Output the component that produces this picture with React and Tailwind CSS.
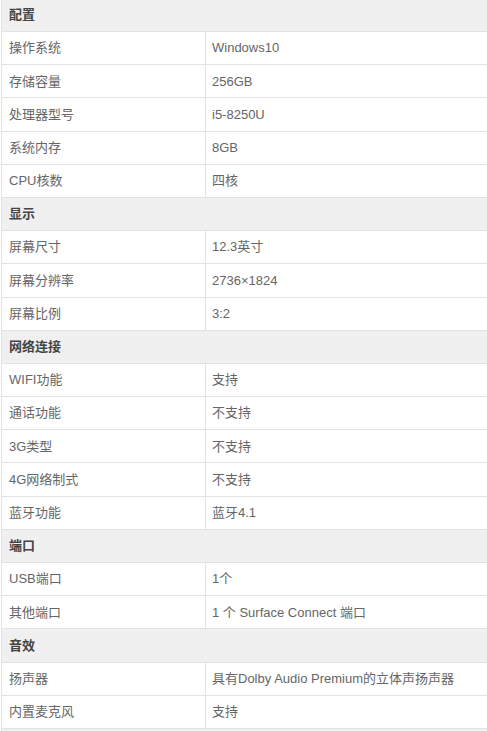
import React from "react";

const sections = [
  {
    title: "配置",
    rows: [
      ["操作系统", "Windows10"],
      ["存储容量", "256GB"],
      ["处理器型号", "i5-8250U"],
      ["系统内存", "8GB"],
      ["CPU核数", "四核"],
    ],
  },
  {
    title: "显示",
    rows: [
      ["屏幕尺寸", "12.3英寸"],
      ["屏幕分辨率", "2736×1824"],
      ["屏幕比例", "3:2"],
    ],
  },
  {
    title: "网络连接",
    rows: [
      ["WIFI功能", "支持"],
      ["通话功能", "不支持"],
      ["3G类型", "不支持"],
      ["4G网络制式", "不支持"],
      ["蓝牙功能", "蓝牙4.1"],
    ],
  },
  {
    title: "端口",
    rows: [
      ["USB端口", "1个"],
      ["其他端口", "1 个 Surface Connect 端口"],
    ],
  },
  {
    title: "音效",
    rows: [
      ["扬声器", "具有Dolby Audio Premium的立体声扬声器"],
      ["内置麦克风", "支持"],
    ],
  },
  { title: "", rows: [] },
];

const SpecTable = () => {
  return (
    <div
      className="w-[487px] h-[731px] overflow-hidden bg-white text-[13px] text-[#666]"
      style={{ fontFamily: '"Liberation Sans", Arial, "Noto Sans CJK SC", sans-serif' }}
    >
      <div className="ml-px border-l border-[#e2e2e2]">
        {sections.map((section, i) => (
          <div key={i}>
            <div
              className={
                "flex items-center border-b border-[#e2e2e2] bg-[#f0f0f0] pl-[7px] font-bold text-[#444] " +
                (i === 0 ? "h-[32px] pb-[2px]" : "h-[33.2px]")
              }
            >
              {section.title}
            </div>
            {section.rows.map(([label, value]) => (
              <div key={label} className="flex h-[33.2px] border-b border-[#e2e2e2]">
                <div className="flex w-[204px] items-center border-r border-[#e2e2e2] pl-[7px]">
                  {label}
                </div>
                <div className="flex flex-1 items-center pl-[6px]">{value}</div>
              </div>
            ))}
          </div>
        ))}
      </div>
    </div>
  );
};

export default function App() {
  return <SpecTable />;
}
